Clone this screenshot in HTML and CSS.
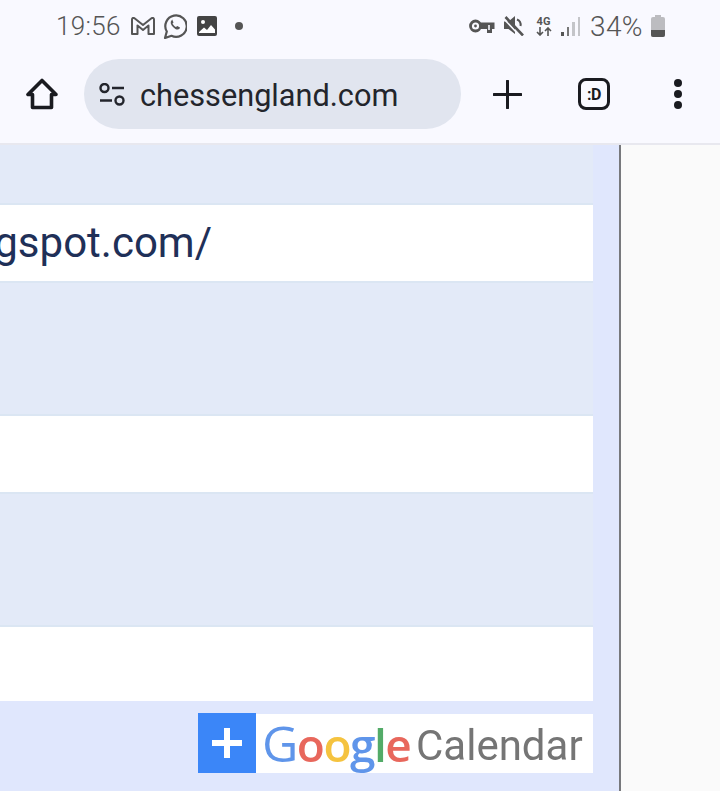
FILE: index.html
```html
<!DOCTYPE html>
<html lang="en">
<head>
  <meta charset="UTF-8" />
  <meta name="viewport" content="width=device-width, initial-scale=1.0" />
  <title>Chess England</title>
  <link rel="stylesheet" href="styles.css">
</head>
<body>
  <header class="status-bar">
    <div class="status-left">
      <span class="time">19:56</span>
      <svg class="icon-gmail" viewBox="0 0 24 18"><path d="M1 17V2.500C1 1 2.500.5 3.500 1.300L12 8l8.500-6.700c1-.8 2.500-.3 2.500 1.200V17h-5.500V8.500L12 13 6.500 8.500V17z" fill="none" stroke="#555" stroke-width="2" stroke-linejoin="round"/></svg>
      <svg class="icon-whatsapp" viewBox="0 0 24 26"><path d="M2 25l1.800-6.500A10.700 10.700 0 1 1 8.500 22.800z" fill="none" stroke="#555" stroke-width="2.200" stroke-linejoin="round"/><path d="M8.500 7.500c-1.500 1.500-.8 4 1.500 6.500s5 3.300 6.500 1.800l.5-1.300-2.800-1.500-1.200 1.100c-1.500-.6-2.800-2-3.500-3.500l1-1.200-1.300-2.800z" fill="#555"/></svg>
      <svg class="icon-image" viewBox="0 0 20 20"><rect width="20" height="20" rx="2" fill="#444"/><circle cx="6" cy="6" r="2" fill="#fff"/><path d="M2 16l5-4.500 3 2.500 4-5 4 4.500V17H2z" fill="#fff"/></svg>
      <span class="status-dot"></span>
    </div>
    <div class="status-right">
      <svg class="icon-key" viewBox="0 0 26 16"><circle cx="6.500" cy="8" r="5" fill="none" stroke="#555" stroke-width="2.800"/><circle cx="6.500" cy="8" r="1.400" fill="#555"/><path d="M11 4.500h14.500v6.500h-2.500v4h-5v-4H11z" fill="#555"/><path d="M20 7v5" stroke="#f9f9ff" stroke-width="1.600"/></svg>
      <svg class="icon-mute" viewBox="0 0 20 20"><path d="M0 5.500h4.500L11 0v18l-6.500-5H0z" fill="#555"/><path d="M13 3.500c2.500 1 4 3.500 3.500 6.500" fill="none" stroke="#555" stroke-width="2"/><path d="M0 3l14 15" stroke="#f9f9ff" stroke-width="1.600"/><path d="M1.500 1l17.500 18.500" stroke="#555" stroke-width="2.600"/></svg>
      <div class="network">
        <span>4G</span>
        <svg viewBox="0 0 16 9"><path d="M4 0v8M1 5l3 3 3-3M12 9V1M9 4l3-3 3 3" fill="none" stroke="#555" stroke-width="1.600"/></svg>
      </div>
      <div class="signal">
        <i class="bar-1"></i><i class="bar-2"></i><i class="bar-3"></i><i class="bar-4"></i>
      </div>
      <span class="battery-text">34%</span>
      <div class="battery"><div class="battery-fill"></div></div>
    </div>
  </header>

  <nav class="toolbar">
    <svg class="icon-home" viewBox="0 0 32 32"><path d="M16 2.500L2 16.500h4.500v13h19v-13H30z" fill="none" stroke="#1a1b20" stroke-width="3.600" stroke-linejoin="round"/></svg>
    <div class="url-pill">
      <svg class="icon-tune" viewBox="0 0 26 23"><circle cx="5.500" cy="5" r="4" fill="none" stroke="#23252c" stroke-width="2.400"/><path d="M13 5h12M1 17.500h12" stroke="#23252c" stroke-width="2.600"/><circle cx="20.500" cy="17.500" r="4" fill="none" stroke="#23252c" stroke-width="2.400"/></svg>
      <span class="url-text">chessengland.com</span>
    </div>
    <svg class="icon-plus" viewBox="0 0 29 29"><path d="M14.500 1v27M1 14.500h27" stroke="#1a1b20" stroke-width="3" stroke-linecap="round"/></svg>
    <div class="tab-count">:D</div>
    <div class="menu-dots"><i></i><i></i><i></i></div>
  </nav>

  <main class="page">
    <section class="content">
      <div class="rows">
        <div class="row row-blue row-first"></div>
        <div class="row row-white row-url">
          <a class="link-clip">gspot.com/</a>
        </div>
        <div class="row row-blue row-tall"></div>
        <div class="row row-white"></div>
        <div class="row row-blue row-tall"></div>
        <div class="row row-white row-last"></div>
      </div>
      <div class="cal-footer">
        <div class="cal-plus">
          <svg viewBox="0 0 34 34"><path d="M17 2v30M2 17h30" stroke="#fff" stroke-width="6"/></svg>
        </div>
        <div class="cal-badge">
          <span class="google"><b class="g-blue g-cap">G</b><b class="g-red">o</b><b class="g-yellow">o</b><b class="g-blue">g</b><b class="g-green">l</b><b class="g-red">e</b></span>
          <span class="calendar">Calendar</span>
        </div>
      </div>
    </section>
    <aside class="side-panel"></aside>
  </main>
</body>
</html>
```

FILE: styles.css
```css
* {
  box-sizing: border-box;
}

html, body {
  height: 100%;
}

body {
  margin: 0;
  display: flex;
  flex-direction: column;
  overflow: hidden;
  font-family: 'Roboto', sans-serif;
  background-color: #f9f9ff;
}

/* Status bar */
.status-bar {
  height: 52px;
  padding: 0 55px 0 56px;
  display: flex;
  align-items: center;
  justify-content: space-between;
  color: #555;
}

.status-left,
.status-right {
  display: flex;
  align-items: center;
}

.time {
  font-size: 26px;
  font-weight: 300;
  letter-spacing: 0.3px;
  width: 75px;
}

.icon-gmail { width: 24px; height: 18px; }
.icon-whatsapp { width: 24px; height: 26px; margin-left: 8px; }
.icon-image { width: 20px; height: 20px; margin-left: 10px; }

.status-dot {
  width: 8px;
  height: 8px;
  margin-left: 18px;
  border-radius: 50%;
  background: #555;
}

.icon-key { width: 26px; height: 16px; }
.icon-mute { width: 20px; height: 20px; margin-left: 9px; }

.network {
  width: 17px;
  margin-left: 11px;
  display: flex;
  flex-direction: column;
  align-items: center;
  font-size: 11px;
  line-height: 10px;
  font-weight: 700;
}

.network svg {
  width: 16px;
  height: 9px;
}

.signal {
  height: 20px;
  margin-left: 9px;
  display: flex;
  align-items: flex-end;
  gap: 3px;
}

.signal i {
  width: 2.5px;
  background: #c4c5c9;
}

.signal .bar-1 { height: 4px; background: #555; }
.signal .bar-2 { height: 9px; background: #777; }
.signal .bar-3 { height: 14px; }
.signal .bar-4 { height: 19px; }

.battery-text {
  margin-left: 10px;
  font-size: 28px;
  font-weight: 300;
  letter-spacing: 0.4px;
  width: 56px;
  white-space: nowrap;
}

.battery {
  width: 14px;
  height: 20px;
  margin-left: 5px;
  display: flex;
  flex-direction: column;
  justify-content: flex-end;
  position: relative;
  border-radius: 2px;
  margin-top: 2px;
  background: #bcbcc0;
}

.battery::before {
  content: "";
  position: absolute;
  top: -2px;
  left: 4px;
  width: 6px;
  height: 2px;
  background: #bcbcc0;
}

.battery-fill {
  height: 7px;
  border-radius: 0 0 2px 2px;
  background: #555;
}

/* Browser toolbar */
.toolbar {
  height: 93px;
  padding: 0 0 7px 26px;
  display: flex;
  align-items: center;
  border-bottom: 2px solid #e8e8ef;
  flex-shrink: 0;
}

.icon-home { width: 32px; height: 32px; }

.url-pill {
  width: 377px;
  height: 70px;
  margin-left: 26px;
  padding-left: 15px;
  display: flex;
  align-items: center;
  border-radius: 35px;
  background: #e1e5ef;
}

.icon-tune { width: 26px; height: 23px; }

.url-text {
  margin-left: 15px;
  padding-top: 2px;
  font-size: 30.7px;
  color: #23252c;
}

.icon-plus { width: 29px; height: 29px; margin-left: 32px; }

.tab-count {
  width: 32px;
  height: 32px;
  margin-left: 56px;
  display: flex;
  align-items: center;
  justify-content: center;
  border: 3px solid #1a1b20;
  border-radius: 8px;
  font-size: 16px;
  font-weight: 700;
  letter-spacing: -0.5px;
  color: #1a1b20;
}

.menu-dots {
  margin-left: 64px;
  display: flex;
  flex-direction: column;
  gap: 3px;
}

.menu-dots i {
  width: 8px;
  height: 8px;
  border-radius: 50%;
  background: #1a1b20;
}

/* Page content */
.page {
  flex: 1;
  display: flex;
  min-height: 0;
}

.content {
  width: 621px;
  padding-right: 26px;
  display: flex;
  flex-direction: column;
  background: #e0e7fd;
  border-right: 2px solid #77787c;
}

.rows {
  display: flex;
  flex-direction: column;
}

.row {
  height: 78px;
  border-bottom: 2px solid #dbe6f3;
}

.row-blue { background: #e3eaf8; }
.row-white { background: #fff; }
.row-first { height: 60px; }
.row-tall { height: 133px; }
.row-last { height: 74px; border-bottom: 0; }

.row-url {
  display: flex;
  align-items: center;
}

.link-clip {
  width: 212px;
  display: flex;
  justify-content: flex-end;
  overflow: hidden;
  white-space: nowrap;
  font-size: 42px;
  line-height: 56px;
  color: #1f3058;
}

.cal-footer {
  margin-top: 12px;
  display: flex;
  justify-content: flex-end;
}

.cal-plus {
  width: 58px;
  height: 60px;
  display: flex;
  align-items: center;
  justify-content: center;
  background: #3b86f8;
}

.cal-plus svg {
  width: 34px;
  height: 34px;
}

.cal-badge {
  width: 337px;
  height: 59px;
  margin-top: 1px;
  padding-left: 6px;
  display: flex;
  align-items: center;
  background: #fff;
  filter: blur(0.5px);
}

.google {
  width: 154px;
  font-family: 'Open Sans', sans-serif;
  font-size: 46px;
  letter-spacing: -1.5px;
  line-height: 59px;
  white-space: nowrap;
}

.google b { font-weight: 600; }
.google .g-cap { font-size: 50px; font-weight: 500; }
.g-blue { color: #5f95ea; }
.g-red { color: #e8675c; }
.g-yellow { color: #f5c33f; }
.g-green { color: #53ab68; }

.calendar {
  padding-top: 3px;
  font-size: 42px;
  color: #757575;
}

.side-panel {
  flex: 1;
  background: #fafafa;
}
```
